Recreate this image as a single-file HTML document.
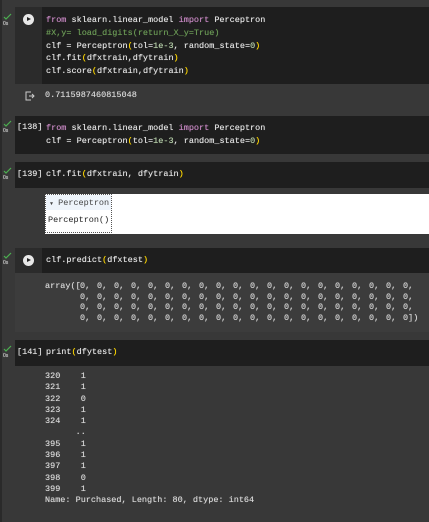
<!DOCTYPE html><html><head><style>
body{margin:0;width:429px;height:522px;background:#383838;overflow:hidden;position:relative;font-family:"Liberation Mono",monospace;font-size:8.5px;color:#e0e0e0;text-shadow:0 0 0.4px currentColor}
.a{position:absolute}
.cell{position:absolute;left:15px;right:0;background:#1e1e1e}
.k{color:#c586c0}.c{color:#6a9955}.p{color:#ffd700}.n{color:#b5cea8}
pre{margin:0;font:inherit;white-space:pre}
.chk{position:absolute;left:3px;width:10px;height:14px}
.run{position:absolute;left:15px;width:27px;background:#2b2b2b}
.btn{position:absolute;left:8px;width:11px;height:11px;border-radius:50%;background:#e8e8e8}
.btn:after{content:"";position:absolute;left:4px;top:3px;border-left:4px solid #222;border-top:2.5px solid transparent;border-bottom:2.5px solid transparent}
.num{position:absolute;left:17px;color:#e0e0e0}
</style></head><body>
<div class="a" style="left:0;top:0;width:2px;height:522px;background:#2a2a2a"></div>

<div class="cell" style="top:7px;height:77px"></div>
<div class="run" style="top:7px;height:77px"></div><div class="btn" style="left:23px;top:14px"></div>
<svg class="chk" style="top:12px" viewBox="0 0 10 14"><path d="M1 5l2 2 5-5" stroke="#4caf50" fill="none" stroke-width="1.2"/><text x="0" y="13" font-size="5" fill="#bbb" font-family="Liberation Sans">0s</text></svg>
<pre class="a" style="left:46px;top:14px;line-height:12.8px"><span class="k">from</span> sklearn.linear_model <span class="k">import</span> Perceptron
<span class="c">#X,y= load_digits(return_X_y=True)</span>
clf = Perceptron<span class="p">(</span>tol=<span class="n">1e-3</span>, random_state=<span class="n">0</span><span class="p">)</span>
clf.fit<span class="p">(</span>dfxtrain,dfytrain<span class="p">)</span>
clf.score<span class="p">(</span>dfxtrain,dfytrain<span class="p">)</span></pre>
<svg class="a" style="left:25px;top:91px" width="10" height="10" viewBox="0 0 10 10"><path d="M6 1H1v8h5M4 5h5M7 3l2 2-2 2" stroke="#ccc" fill="none" stroke-width="1"/></svg>
<pre class="a" style="left:45px;top:90px;color:#d5d5d5">0.7115987460815048</pre>

<div class="cell" style="top:116px;height:38px"></div>
<svg class="chk" style="top:119px" viewBox="0 0 10 14"><path d="M1 5l2 2 5-5" stroke="#4caf50" fill="none" stroke-width="1.2"/><text x="0" y="13" font-size="5" fill="#bbb" font-family="Liberation Sans">0s</text></svg>
<pre class="num a" style="top:122px">[138]</pre>
<pre class="a" style="left:46px;top:122px;line-height:12.5px"><span class="k">from</span> sklearn.linear_model <span class="k">import</span> Perceptron
clf = Perceptron<span class="p">(</span>tol=<span class="n">1e-3</span>, random_state=<span class="n">0</span><span class="p">)</span></pre>

<div class="cell" style="top:162px;height:26px"></div>
<svg class="chk" style="top:166px" viewBox="0 0 10 14"><path d="M1 5l2 2 5-5" stroke="#4caf50" fill="none" stroke-width="1.2"/><text x="0" y="13" font-size="5" fill="#bbb" font-family="Liberation Sans">0s</text></svg>
<pre class="num a" style="top:169px">[139]</pre>
<pre class="a" style="left:46px;top:169px">clf.fit<span class="p">(</span>dfxtrain, dfytrain<span class="p">)</span></pre>
<div class="a" style="left:45px;top:194px;width:384px;height:40px;background:#fff"></div>
<div class="a" style="left:45px;top:194px;width:67px;height:39px;border:1px dotted #555;box-sizing:border-box"></div>
<div class="a" style="left:46px;top:195px;width:65px;height:15px;background:#eef4fb"></div>
<pre class="a" style="left:50px;top:198px;color:#444;text-shadow:none"><span style="font-size:5px">▼</span> Perceptron</pre>
<pre class="a" style="left:48px;top:215px;color:#222;text-shadow:none">Perceptron()</pre>

<div class="cell" style="top:248px;height:25px"></div>
<div class="run" style="top:248px;height:25px"></div><div class="btn" style="left:23px;top:255px"></div>
<svg class="chk" style="top:251px" viewBox="0 0 10 14"><path d="M1 5l2 2 5-5" stroke="#4caf50" fill="none" stroke-width="1.2"/><text x="0" y="13" font-size="5" fill="#bbb" font-family="Liberation Sans">0s</text></svg>
<pre class="a" style="left:46px;top:255px">clf.predict<span class="p">(</span>dfxtest<span class="p">)</span></pre>
<div class="a" style="left:15px;top:273px;width:414px;height:59px;background:#3c3c3c"></div>
<pre class="a" style="left:45px;top:281px;color:#d5d5d5">array([</pre>
<pre class="a" style="left:80px;top:281px;line-height:10.5px;color:#d5d5d5;word-spacing:1.7px">0, 0, 0, 0, 0, 0, 0, 0, 0, 0, 0, 0, 0, 0, 0, 0, 0, 0, 0, 0,
0, 0, 0, 0, 0, 0, 0, 0, 0, 0, 0, 0, 0, 0, 0, 0, 0, 0, 0, 0,
0, 0, 0, 0, 0, 0, 0, 0, 0, 0, 0, 0, 0, 0, 0, 0, 0, 0, 0, 0,
0, 0, 0, 0, 0, 0, 0, 0, 0, 0, 0, 0, 0, 0, 0, 0, 0, 0, 0, 0])</pre>

<div class="cell" style="top:340px;height:26px"></div>
<svg class="chk" style="top:344px" viewBox="0 0 10 14"><path d="M1 5l2 2 5-5" stroke="#4caf50" fill="none" stroke-width="1.2"/><text x="0" y="13" font-size="5" fill="#bbb" font-family="Liberation Sans">0s</text></svg>
<pre class="num a" style="top:347px">[141]</pre>
<pre class="a" style="left:46px;top:347px">print<span class="p">(</span>dfytest<span class="p">)</span></pre>
<pre class="a" style="left:45px;top:371px;line-height:11.3px;color:#d5d5d5">320    1
321    1
322    0
323    1
324    1
      ..
395    1
396    1
397    1
398    0
399    1
Name: Purchased, Length: 80, dtype: int64</pre>
</body></html>
